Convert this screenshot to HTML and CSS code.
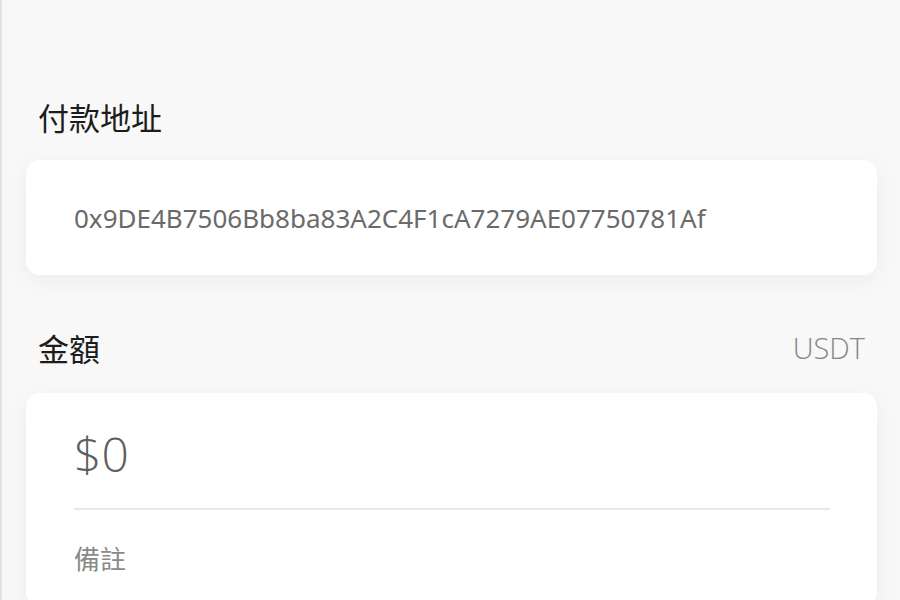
FILE: index.html
```html
<!DOCTYPE html>
<html lang="zh-Hant">
<head>
<meta charset="utf-8">
<title>付款</title>
<link rel="stylesheet" href="styles.css">
</head>
<body>
<div class="page">
  <div class="section-head first">
    <span class="label">付款地址</span>
  </div>
  <div class="card address-card">
    <span class="address">0x9DE4B7506Bb8ba83A2C4F1cA7279AE07750781Af</span>
  </div>
  <div class="section-head second">
    <span class="label">金額</span>
    <span class="unit">USDT</span>
  </div>
  <div class="card amount-card">
    <div class="amount">$0</div>
    <div class="divider"></div>
    <div class="memo">備註</div>
  </div>
</div>
</body>
</html>
```
FILE: styles.css
```css
html, body {
  margin: 0;
  padding: 0;
  background: #f7f8f7;
  font-family: "Noto Sans", "Noto Sans CJK TC", sans-serif;
}
.page {
  box-sizing: border-box;
  border-left: 2px solid #e2e2e2;
  padding: 0 23px 0 24px;
  overflow: hidden;
  height: 600px;
}
.section-head {
  display: flex;
  justify-content: space-between;
  align-items: center;
  padding: 0 12px;
  height: 42px;
}
.section-head.first {
  margin-top: 95px;
  margin-bottom: 23px;
}
.section-head.second {
  margin-top: 51px;
  margin-bottom: 25px;
}
.label {
  font-size: 31px;
  color: #1c1c1c;
  font-family: "Noto Sans CJK TC", sans-serif;
  font-weight: 400;
}
.unit {
  font-size: 29px;
  color: #878787;
  font-family: "Open Sans", "Noto Sans", sans-serif;
  font-weight: 350;
}
.card {
  background: #fff;
  border-radius: 14px;
  box-shadow: 0 6px 24px rgba(30, 40, 60, 0.05);
}
.address-card {
  height: 115px;
  display: flex;
  align-items: center;
  padding: 0 48px;
}
.address {
  font-size: 26px;
  color: #6a6a6a;
}
.amount-card {
  padding: 28px 47px 30px 48px;
}
.amount {
  font-family: "Open Sans", "Noto Sans", sans-serif;
  font-weight: 350;
  font-size: 48px;
  line-height: 66px;
  color: #5e5e5e;
}
.divider {
  height: 2px;
  background: #e8e8e8;
  margin-top: 21px;
}
.memo {
  margin-top: 30px;
  font-size: 26px;
  line-height: 36px;
  color: #8a8a8a;
  font-family: "Noto Sans CJK TC", sans-serif;
}
```
